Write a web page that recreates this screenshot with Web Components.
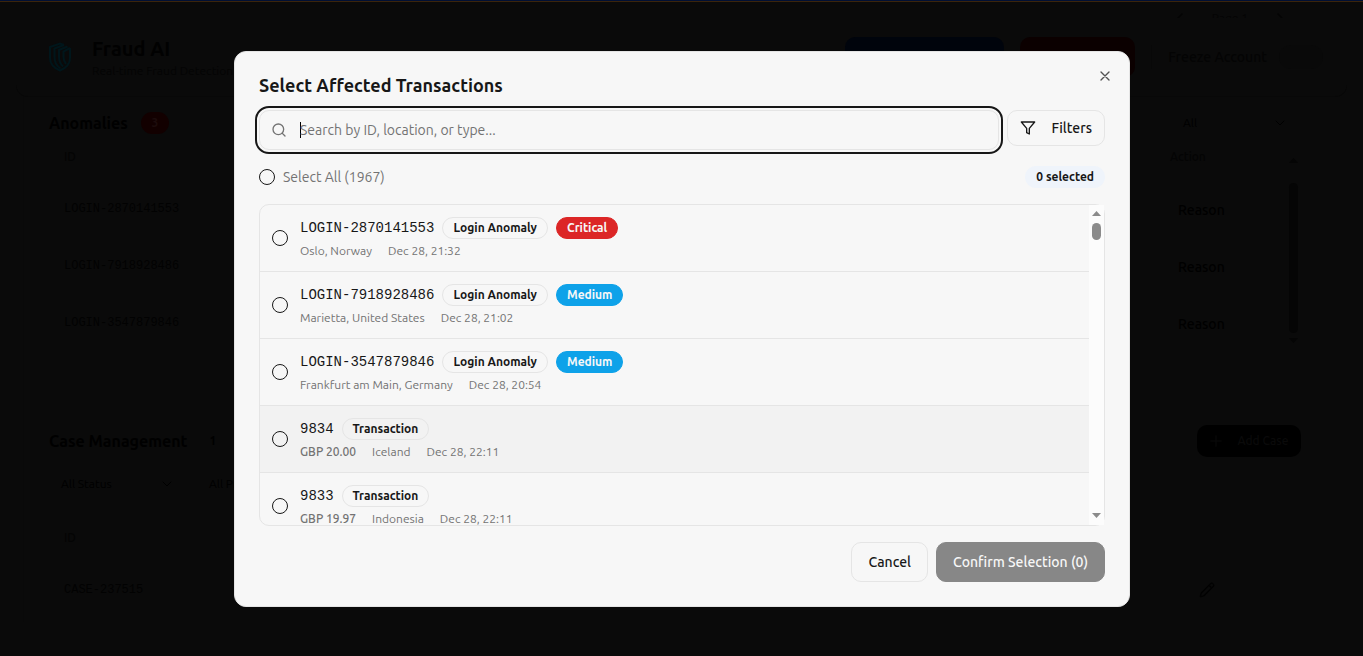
<!DOCTYPE html>
<html lang="en">
  <head>
    <meta charset="UTF-8" />
    <meta name="viewport" content="width=device-width, initial-scale=1.0" />
    <title>Fraud AI</title>
    <style>
      body {
        margin: 0;
        min-height: 100vh;
        background: #0a0a0a;
        color: #000;
        font-family: Ubuntu, 'Noto Sans', sans-serif;
        font-size: 14px;
        line-height: 20px;
        --mono: 'Liberation Mono', monospace;
        --ink: #171717;
        --muted: #737373;
        --line: #e5e5e5;
        --surface: #f7f7f7;
      }
    </style>
  </head>
  <body>
    <fraud-dashboard></fraud-dashboard>

    <select-dialog>
      <span slot="title">Select Affected Transactions</span>
      <transaction-row kind="Login Anomaly" severity="Critical">
        <span slot="id">LOGIN-2870141553</span>
        <span slot="place">Oslo, Norway</span>
        <span slot="date">Dec 28, 21:32</span>
      </transaction-row>
      <transaction-row kind="Login Anomaly" severity="Medium">
        <span slot="id">LOGIN-7918928486</span>
        <span slot="place">Marietta, United States</span>
        <span slot="date">Dec 28, 21:02</span>
      </transaction-row>
      <transaction-row kind="Login Anomaly" severity="Medium">
        <span slot="id">LOGIN-3547879846</span>
        <span slot="place">Frankfurt am Main, Germany</span>
        <span slot="date">Dec 28, 20:54</span>
      </transaction-row>
      <transaction-row kind="Transaction" amount="GBP 20.00" active>
        <span slot="id">9834</span>
        <span slot="place">Iceland</span>
        <span slot="date">Dec 28, 22:11</span>
      </transaction-row>
      <transaction-row kind="Transaction" amount="GBP 19.97">
        <span slot="id">9833</span>
        <span slot="place">Indonesia</span>
        <span slot="date">Dec 28, 22:11</span>
      </transaction-row>
    </select-dialog>

    <template id="dashboard">
      <style>
        :host {
          display: block;
        }
        .strip {
          height: 1px;
          background: #000f33;
          border-bottom: 1px solid #3a240c;
        }
        .pager {
          display: flex;
          align-items: flex-start;
          justify-content: flex-end;
          gap: 24px;
          box-sizing: border-box;
          height: 16px;
          padding: 6px 75px 0 0;
          font-size: 12px;
          color: #040404;
        }
        .pager ui-icon {
          padding-top: 2px;
        }
        header {
          position: relative;
          display: flex;
          align-items: center;
          gap: 16px;
          box-sizing: border-box;
          height: 79px;
          margin: 0 16px;
          padding: 0 24px 0 32px;
          border-bottom: 1px solid #080808;
          border-radius: 0 0 12px 12px;
          background: #0a0a0a;
        }
        header svg {
          width: 24px;
          height: 30px;
          fill: none;
          stroke: #00161b;
          stroke-width: 2;
        }
        .brand {
          flex: 1;
          padding: 4px 0 0 4px;
        }
        h1,
        h2 {
          margin: 0;
          font-weight: 700;
        }
        h1 {
          font-size: 20px;
          line-height: 24px;
          color: #010101;
        }
        .brand p {
          margin: 0;
          font-size: 12px;
          color: #040404;
        }
        header button {
          width: 159px;
          height: 40px;
          border: 0;
          border-radius: 10px;
          background: #00040c;
        }
        header button.danger {
          width: 115px;
          background: #0b0000;
        }
        .freeze {
          display: flex;
          align-items: center;
          gap: 12px;
          padding-left: 16px;
          border-left: 1px solid #080808;
          font-weight: 500;
          color: #040404;
        }
        .freeze input {
          appearance: none;
          width: 44px;
          height: 24px;
          margin: 0;
          border-radius: 12px;
          background: #090909;
        }
        main {
          margin: 0 23px;
          padding: 0 25px;
          border-left: 1px solid #090909;
        }
        .bar {
          display: flex;
          align-items: center;
        }
        .anomalies .bar {
          height: 32px;
          padding-top: 10px;
          gap: 13px;
        }
        h2 {
          font-size: 16px;
          line-height: 24px;
        }
        .count {
          width: 28px;
          border-radius: 11px;
          background: #120000;
          color: #1c0c0c;
          font-size: 12px;
          font-weight: 700;
          line-height: 22px;
          text-align: center;
        }
        .pick {
          display: flex;
          align-items: center;
          justify-content: space-between;
          box-sizing: border-box;
          width: 136px;
          padding: 0 12px;
          font-size: 12px;
        }
        .anomalies .pick {
          width: 132px;
          margin-left: auto;
          padding: 0 29px 0 0;
        }
        .body {
          display: flex;
          height: 284px;
        }
        table {
          flex: 1;
          align-self: flex-start;
          border-spacing: 0;
          font-size: 12px;
        }
        th {
          height: 35px;
          padding: 0 0 6px;
          text-align: left;
          font-size: 12px;
          font-weight: 500;
          color: #040404;
        }
        th:first-child,
        td:first-child {
          padding-left: 15px;
        }
        td {
          height: 57px;
          padding: 0;
          font-family: var(--mono);
          color: #020202;
        }
        td ui-icon,
        td button {
          vertical-align: middle;
        }
        .anomalies th:last-child {
          width: 116px;
        }
        td button {
          padding: 2px 8px 0;
          border: 0;
          background: none;
          color: #000;
          font: 500 14px/20px Ubuntu, 'Noto Sans', sans-serif;
        }
        .anomalies scroll-track {
          height: 198px;
          margin: 13px 14px 0 0;
          --track: none;
          --thumb: #050505;
          --thumb-height: 150px;
          --thumb-gap: 20px;
        }
        .cases .bar {
          gap: 22px;
          height: 36px;
        }
        .cases .one {
          font-size: 12px;
          font-weight: 700;
        }
        .add {
          display: flex;
          align-items: center;
          justify-content: center;
          gap: 14px;
          box-sizing: border-box;
          width: 104px;
          height: 32px;
          margin: 0 14px 0 auto;
          padding: 0;
          border: 0;
          border-radius: 10px;
          background: #000;
          color: #0a0a0a;
          font: inherit;
          font-size: 12px;
          font-weight: 500;
        }
        .filters {
          display: flex;
          gap: 12px;
          padding-top: 15px;
        }
        .cases table {
          width: 100%;
          margin-top: 24px;
        }
        .cases th {
          height: 40px;
          padding-bottom: 0;
        }
        .cases th:last-child {
          width: 116px;
        }
        .cases td {
          height: 64px;
        }
      </style>
      <div class="strip"></div>
      <div class="pager">
        <ui-icon name="left" size="16"></ui-icon><span>Page 1</span
        ><ui-icon name="right" size="16"></ui-icon>
      </div>
      <header>
        <svg viewBox="0 0 24 30">
          <path d="M16 3 12 1.500 2 5v11c0 6 4 10 10 12.500C18 26 22 22 22 16V6" />
          <path d="M16 3 6.500 6.500V15c0 5 2 9 6 11.500M19.500 4.500 11 8v7c0 4 1.500 7 4 9.500M22 6l-6.500 3.500V15c0 3 1 5 2.500 7" />
        </svg>
        <div class="brand">
          <h1>Fraud AI</h1>
          <p>Real-time Fraud Detection</p>
        </div>
        <button type="button" aria-label="Report"></button>
        <button type="button" class="danger" aria-label="Block"></button>
        <label class="freeze">Freeze Account <input type="checkbox" role="switch" /></label>
      </header>
      <main>
        <section class="anomalies">
          <div class="bar">
            <h2>Anomalies</h2>
            <span class="count">3</span>
            <div class="pick">All <ui-icon name="down" size="12"></ui-icon></div>
          </div>
          <div class="body">
            <table>
              <tr><th>ID</th><th>Action</th></tr>
              <tr><td>LOGIN-2870141553</td><td><button type="button">Reason</button></td></tr>
              <tr><td>LOGIN-7918928486</td><td><button type="button">Reason</button></td></tr>
              <tr><td>LOGIN-3547879846</td><td><button type="button">Reason</button></td></tr>
            </table>
            <scroll-track></scroll-track>
          </div>
        </section>
        <section class="cases">
          <div class="bar">
            <h2>Case Management</h2>
            <span class="one">1</span>
            <button type="button" class="add"><ui-icon name="plus" size="14"></ui-icon>Add Case</button>
          </div>
          <div class="filters">
            <div class="pick">All Status <ui-icon name="down" size="12"></ui-icon></div>
            <div class="pick">All Priority</div>
          </div>
          <table>
            <tr><th>ID</th><th></th></tr>
            <tr><td>CASE-237515</td><td><ui-icon name="pencil" size="16"></ui-icon></td></tr>
          </table>
        </section>
      </main>
    </template>

    <template id="dialog">
      <style>
        :host {
          position: fixed;
          inset: 0;
          display: grid;
          place-items: center;
          padding: 2px 0 0 1px;
        }
        .dialog {
          position: relative;
          display: flex;
          flex-direction: column;
          gap: 16px;
          box-sizing: border-box;
          width: 100%;
          max-width: 896px;
          padding: 24px;
          border: 1px solid var(--line);
          border-radius: 12px;
          background: var(--surface);
          color: var(--ink);
        }
        h2 {
          margin: 0;
          font-size: 18px;
          font-weight: 700;
          line-height: 18px;
        }
        .close {
          position: absolute;
          top: 16px;
          right: 16px;
          display: flex;
          padding: 0;
          border: 0;
          background: none;
          color: #525252;
        }
        .tools,
        .all,
        footer {
          display: flex;
        }
        .tools {
          align-items: flex-start;
          gap: 8px;
        }
        .search {
          position: relative;
          flex: 1;
        }
        .search ui-icon {
          position: absolute;
          top: 12px;
          left: 12px;
          color: var(--muted);
        }
        .search input {
          display: block;
          box-sizing: border-box;
          width: 100%;
          height: 40px;
          padding: 0 12px 0 40px;
          border: 1px solid var(--line);
          border-radius: 10px;
          outline: 2px solid var(--ink);
          outline-offset: 2px;
          /* the caret */
          background: linear-gradient(#000 0 0) 40px center / 1px 16px no-repeat;
          caret-color: transparent;
          color: var(--ink);
          font: inherit;
        }
        .search input::placeholder {
          color: var(--muted);
        }
        button {
          font: inherit;
          font-weight: 500;
        }
        .btn {
          display: flex;
          align-items: center;
          justify-content: center;
          box-sizing: border-box;
          height: 40px;
          padding: 0 16px;
          border: 1px solid var(--line);
          border-radius: 10px;
          background: var(--surface);
          color: var(--ink);
        }
        .filters {
          height: 36px;
          gap: 16px;
          padding: 0 12px;
        }
        .confirm {
          border-color: #878787;
          background: #878787;
          color: #f7f7f7;
        }
        .all {
          align-items: center;
          justify-content: space-between;
        }
        .all label {
          display: flex;
          align-items: center;
          gap: 8px;
          color: var(--muted);
        }
        .all input {
          appearance: none;
          box-sizing: border-box;
          width: 16px;
          height: 16px;
          margin: 0;
          border: 1px solid var(--ink);
          border-radius: 50%;
        }
        .list {
          display: flex;
          height: 320px;
          border: 1px solid var(--line);
          border-radius: 10px;
        }
        .rows {
          flex: 1;
          overflow: hidden;
        }
        footer {
          justify-content: flex-end;
          gap: 8px;
        }
      </style>
      <div class="dialog" role="dialog" aria-labelledby="title">
        <h2 id="title"><slot name="title"></slot></h2>
        <button type="button" class="close" aria-label="Close"><ui-icon name="close" size="16"></ui-icon></button>
        <div class="tools">
          <div class="search">
            <ui-icon name="search" size="16"></ui-icon>
            <input type="text" aria-label="Search" placeholder="Search by ID, location, or type..." />
          </div>
          <button type="button" class="btn filters"><ui-icon name="filter" size="16"></ui-icon>Filters</button>
        </div>
        <div class="all">
          <label><input type="checkbox" />Select All (1967)</label>
          <ui-badge tone="soft">0 selected</ui-badge>
        </div>
        <div class="list">
          <div class="rows"><slot></slot></div>
          <scroll-track></scroll-track>
        </div>
        <footer>
          <button type="button" class="btn">Cancel</button>
          <button type="button" class="btn confirm">Confirm Selection (0)</button>
        </footer>
      </div>
    </template>

    <template id="row">
      <style>
        :host {
          display: block;
          border-bottom: 1px solid var(--line);
        }
        :host([active]) {
          background: #f2f2f2;
        }
        label {
          display: flex;
          align-items: center;
          gap: 12px;
          padding: 12px;
        }
        input {
          appearance: none;
          box-sizing: border-box;
          width: 16px;
          height: 16px;
          margin: 0;
          border: 1px solid var(--ink);
          border-radius: 50%;
        }
        .text {
          display: grid;
          gap: 4px;
        }
        .top,
        .meta {
          display: flex;
          align-items: center;
        }
        .top {
          gap: 8px;
          font-family: var(--mono);
        }
        .meta {
          gap: 16px;
          color: var(--muted);
          font-size: 12px;
          line-height: 16px;
        }
        b {
          font-weight: 500;
        }
      </style>
      <label>
        <input type="checkbox" />
        <span class="text">
          <span class="top"><slot name="id"></slot></span>
          <span class="meta"><slot name="place"></slot><slot name="date"></slot></span>
        </span>
      </label>
    </template>

    <script>
      const clone = (id) => document.getElementById(id).content.cloneNode(true)

      const icons = {
        search: '<circle cx="11" cy="11" r="8"/><path d="m21 21-4.300-4.300"/>',
        filter: '<path d="M22 3H2l8 9.460V19l4 2v-8.540z"/>',
        close: '<path d="M18 6 6 18M6 6l12 12"/>',
        left: '<path d="m15 18-6-6 6-6"/>',
        right: '<path d="m9 18 6-6-6-6"/>',
        down: '<path d="m4 8 8 8 8-8"/>',
        plus: '<path d="M3 12h18M12 3v18"/>',
        pencil:
          '<path d="M21.170 6.810a1 1 0 0 0-3.980-3.980L3.840 16.170a2 2 0 0 0-.5.830l-1.320 4.350a.5.5 0 0 0 .620.620l4.350-1.320a2 2 0 0 0 .830-.5zM15 5l4 4"/>'
      }

      customElements.define(
        'ui-icon',
        class extends HTMLElement {
          constructor() {
            super()
            const size = this.getAttribute('size')
            this.attachShadow({ mode: 'open' }).innerHTML = `
              <style>
                :host { display: inline-flex; flex: none; }
                svg { fill: none; stroke: currentColor; stroke-width: 2; stroke-linecap: round; stroke-linejoin: round; }
              </style>
              <svg width="${size}" height="${size}" viewBox="0 0 24 24">${icons[this.getAttribute('name')]}</svg>`
          }
        }
      )

      customElements.define(
        'ui-badge',
        class extends HTMLElement {
          constructor() {
            super()
            this.attachShadow({ mode: 'open' }).innerHTML = `
              <style>
                :host {
                  display: inline-flex;
                  padding: 2px 10px;
                  border: 1px solid var(--line);
                  border-radius: 11px;
                  color: var(--ink);
                  font: 700 12px/16px Ubuntu, 'Noto Sans', sans-serif;
                }
                :host([tone='soft']) { background: #eff4fb; border-color: transparent; }
                :host([tone='Critical']) { background: #dc2626; border-color: #dc2626; color: #f7f7f7; }
                :host([tone='Medium']) { background: #0ea2e9; border-color: #0ea2e9; color: #f7f7f7; }
              </style>
              <slot></slot>`
          }
        }
      )

      customElements.define(
        'scroll-track',
        class extends HTMLElement {
          constructor() {
            super()
            this.attachShadow({ mode: 'open' }).innerHTML = `
              <style>
                :host {
                  display: flex;
                  flex-direction: column;
                  align-items: center;
                  box-sizing: border-box;
                  width: 15px;
                  padding: 6px 0 7px;
                  background: var(--track, #fcfcfc);
                }
                svg { width: 9px; height: 5px; fill: var(--thumb, #8b8b8b); }
                i {
                  width: 9px;
                  height: var(--thumb-height, 17px);
                  margin: var(--thumb-gap, 7px) 0 auto;
                  border-radius: 5px;
                  background: var(--thumb, #8b8b8b);
                }
              </style>
              <svg viewBox="0 0 9 5"><path d="M0 5 4.500 0 9 5z"/></svg>
              <i></i>
              <svg viewBox="0 0 9 5"><path d="M0 0h9L4.500 5z"/></svg>`
          }
        }
      )

      customElements.define(
        'transaction-row',
        class extends HTMLElement {
          constructor() {
            super()
            const root = this.attachShadow({ mode: 'open' })
            root.appendChild(clone('row'))
            for (const name of ['kind', 'severity']) {
              const value = this.getAttribute(name)
              if (!value) continue
              const badge = `<ui-badge tone="${value}">${value}</ui-badge>`
              root.querySelector('.top').insertAdjacentHTML('beforeend', badge)
            }
            const amount = this.getAttribute('amount')
            if (amount) {
              root.querySelector('.meta').insertAdjacentHTML('afterbegin', `<b>${amount}</b>`)
            }
          }
        }
      )

      customElements.define(
        'fraud-dashboard',
        class extends HTMLElement {
          constructor() {
            super()
            this.attachShadow({ mode: 'open' }).appendChild(clone('dashboard'))
          }
        }
      )

      customElements.define(
        'select-dialog',
        class extends HTMLElement {
          constructor() {
            super()
            this.attachShadow({ mode: 'open' }).appendChild(clone('dialog'))
          }
          connectedCallback() {
            this.shadowRoot.querySelector('.search input').focus()
          }
        }
      )
    </script>
  </body>
</html>
